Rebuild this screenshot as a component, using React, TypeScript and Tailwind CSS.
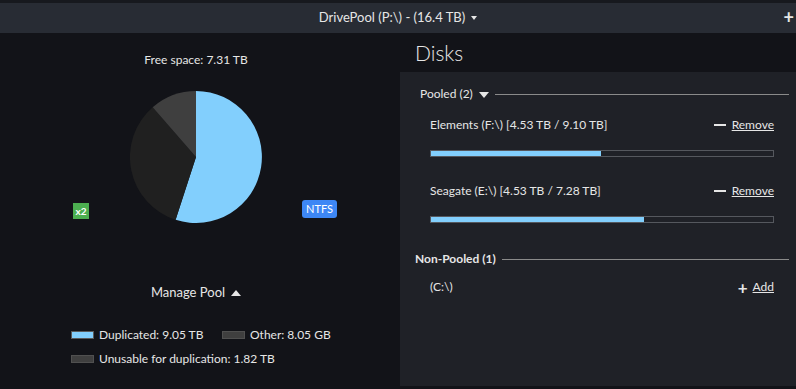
import React from 'react'

const font = { fontFamily: 'Lato, "Noto Sans", sans-serif' }

type Disk = { name: string; used: number }

const pooled: Disk[] = [
  { name: 'Elements (F:\\) [4.53 TB / 9.10 TB]', used: 0.497 },
  { name: 'Seagate (E:\\) [4.53 TB / 7.28 TB]', used: 0.622 },
]

function Pie() {
  return (
    <svg width="132" height="132" viewBox="0 0 132 132">
      <path d="M66 66 L66 0 A66 66 0 1 1 45.6 128.8 Z" fill="#82cffd" />
      <path d="M66 66 L45.6 128.8 A66 66 0 0 1 22.7 16.2 Z" fill="#202020" />
      <path d="M66 66 L22.7 16.2 A66 66 0 0 1 66 0 Z" fill="#3f3f3f" />
    </svg>
  )
}

function Caret({ up }: { up?: boolean }) {
  return (
    <svg width="10" height="6" viewBox="0 0 10 6" className="inline-block">
      {up ? <path d="M0 6 L5 0 L10 6 Z" fill="#e6e6e6" /> : <path d="M0 0 L10 0 L5 6 Z" fill="#e6e6e6" />}
    </svg>
  )
}

function DiskRow({ disk }: { disk: Disk }) {
  return (
    <div className="pl-[30px] pr-[22px]">
      <div className="flex items-center justify-between h-[22px]">
        <span>{disk.name}</span>
        <span className="flex items-center gap-[6px]">
          <span className="w-[12px] h-[2px] bg-[#e6e6e6]" />
          <span className="underline">Remove</span>
        </span>
      </div>
      <div className="mt-[14px] h-[7px] border border-[#55585e] bg-[#1f2127]">
        <div className="h-full bg-[#82cffd]" style={{ width: `${disk.used * 100}%` }} />
      </div>
    </div>
  )
}

export default function App() {
  return (
    <div className="w-[796px] h-[389px] bg-[#121318] text-[#e6e6e6] text-[12px] overflow-hidden flex flex-col" style={font}>
      <div className="h-[3px] bg-[#17191e]" />
      <div className="h-[30px] bg-[#282c34] flex items-center relative">
        <div className="flex-1 flex items-center justify-center gap-[6px] text-[13px]">
          <span>DrivePool (P:\) - (16.4 TB)</span>
          <svg width="6" height="4" viewBox="0 0 6 4"><path d="M0 0 L6 0 L3 4 Z" fill="#e6e6e6" /></svg>
        </div>
        <span className="absolute right-[2px] top-[5px] text-[18px] font-bold leading-none">+</span>
      </div>

      <div className="flex flex-1">
        {/* left column */}
        <div className="w-[392px] flex flex-col">
          <div className="mt-[19px] text-center h-[16px] leading-[16px]">Free space: 7.31 TB</div>
          <div className="flex items-end mt-[23px]">
            <div className="ml-[73px] mb-[4px] w-[16px] h-[16px] bg-[#4caf50] text-white font-bold text-[10px] flex items-center justify-center">x2</div>
            <div className="ml-[41px]"><Pie /></div>
            <div className="ml-[40px] mb-[5px] w-[35px] h-[18px] bg-[#3d87f5] rounded-[3px] text-white text-[11px] flex items-center justify-center">NTFS</div>
          </div>
          <div className="mt-[61px] flex items-center justify-center gap-[6px] text-[13px] h-[18px]">
            <span>Manage Pool</span>
            <Caret up />
          </div>
          <div className="mt-[25px] ml-[71px] flex flex-col gap-[9px]">
            <div className="flex items-center h-[15px]">
              <span className="w-[23px] h-[8px] bg-[#82cffd] border border-[#5a5a5a]" />
              <span className="ml-[5px] w-[123px]">Duplicated: 9.05 TB</span>
              <span className="w-[23px] h-[8px] bg-[#3f3f3f] border border-[#505050]" />
              <span className="ml-[5px]">Other: 8.05 GB</span>
            </div>
            <div className="flex items-center h-[15px]">
              <span className="w-[23px] h-[8px] bg-[#3f3f3f] border border-[#505050]" />
              <span className="ml-[5px]">Unusable for duplication: 1.82 TB</span>
            </div>
          </div>
        </div>

        {/* right column */}
        <div className="flex-1 flex flex-col ml-[8px]">
          <div className="h-[39px] pl-[15px] pt-[8px] text-[21px] font-light leading-[24px]">Disks</div>
          <div className="flex-1 mb-[3px] bg-[#1f2127] pt-[13px]">
            <div className="flex items-center pl-[20px] pr-[7px] h-[18px]">
              <span>Pooled (2)</span>
              <span className="ml-[6px]"><Caret /></span>
              <span className="ml-[6px] flex-1 h-px bg-[#8a8a8a]" />
            </div>
            <div className="mt-[11px] flex flex-col gap-[23px]">
              {pooled.map(d => (
                <DiskRow key={d.name} disk={d} />
              ))}
            </div>
            <div className="mt-[27px] flex items-center pl-[15px] pr-[7px] h-[18px]">
              <span className="font-bold">Non-Pooled (1)</span>
              <span className="ml-[6px] flex-1 h-px bg-[#8a8a8a]" />
            </div>
            <div className="mt-[9px] pl-[30px] pr-[22px] flex items-center justify-between h-[20px]">
              <span>(C:\)</span>
              <span className="flex items-center gap-[5px]">
                <span className="text-[17px] font-bold leading-none">+</span>
                <span className="underline">Add</span>
              </span>
            </div>
          </div>
        </div>
      </div>
    </div>
  )
}
